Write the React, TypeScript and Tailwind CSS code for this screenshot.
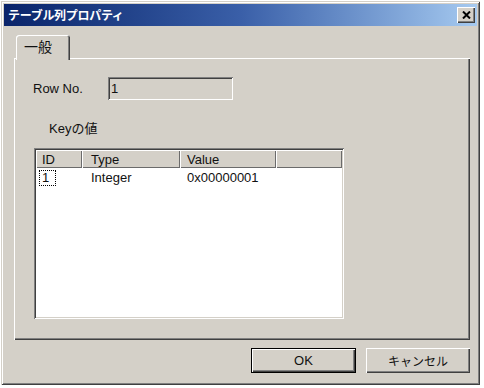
import React from "react";

const raised =
  "shadow-[inset_1px_1px_0_#ffffff,inset_-1px_-1px_0_#404040,inset_-2px_-2px_0_#808080]";
const sunken =
  "shadow-[inset_1px_1px_0_#808080,inset_-1px_-1px_0_#ffffff,inset_2px_2px_0_#404040,inset_-2px_-2px_0_#d4d0c8]";

export default function App() {
  return (
    <div className="w-[484px] h-[388px] bg-white pl-[1px] pt-[1px] text-[#111] font-['Liberation_Sans','Noto_Sans_CJK_JP',sans-serif]">
      <div className="w-[479px] h-[384px] bg-[#d4d0c8] p-[3px] flex flex-col shadow-[inset_1px_1px_0_#d4d0c8,inset_-1px_-1px_0_#404040,inset_2px_2px_0_#ffffff,inset_-2px_-2px_0_#808080]">
        {/* Title bar */}
        <div className="h-[22px] shrink-0 flex items-center justify-between pl-[4px] pr-[2px] bg-linear-to-r from-[#0a246a] via-[#3a5fa8] to-[#a6caf0]">
          <span className="text-white text-[12px] font-bold leading-none font-['Noto_Sans_CJK_JP',sans-serif] tracking-[-0.3px]">
            テーブル列プロパティ
          </span>
          <div className={`w-[18px] h-[16px] bg-[#d4d0c8] flex items-center justify-center ${raised}`}>
            <svg width="9" height="8" viewBox="0 0 9 8">
              <path d="M1 0.5 L8 7.5 M8 0.5 L1 7.5" stroke="#000" strokeWidth="2" fill="none" />
            </svg>
          </div>
        </div>

        {/* Body */}
        <div className="flex-1 flex flex-col pl-[10px] pr-[7px] pt-[9px]">
          {/* Tab strip */}
          <div className="flex pl-[2px]">
            <div className="relative z-10 -mb-[2px] h-[25px] w-[54px] bg-[#d4d0c8] rounded-t-[3px] flex items-start pt-[3px] pl-[8px] shadow-[inset_1px_1px_0_#ffffff,inset_-1px_0_0_#404040,inset_-2px_0_0_#808080]">
              <span className="text-[14px] leading-[17px] font-['Noto_Sans_CJK_JP',sans-serif]">一般</span>
            </div>
          </div>

          {/* Panel */}
          <div className={`w-[456px] h-[282px] shrink-0 flex flex-col pt-[19px] ${raised}`}>
            <div className="flex items-center pl-[19px]">
              <span className="w-[75px] text-[13px] leading-[15px]">Row No.</span>
              <div className={`w-[125px] h-[23px] bg-[#d4d0c8] flex items-center pl-[3px] text-[13px] leading-[15px] ${sunken}`}>
                1
              </div>
            </div>

            <div className="mt-[20px] pl-[35px] text-[13px] leading-[15px]">
              Key<span className="font-['Noto_Sans_CJK_JP',sans-serif]">の値</span>
            </div>

            <div className={`mt-[12px] ml-[20px] w-[310px] h-[171px] bg-white p-[2px] flex flex-col ${sunken}`}>
              {/* Header */}
              <div className="flex h-[18px] text-[13px] leading-[15px]">
                <div className="w-[46px] bg-[#d4d0c8] pl-[6px] flex items-center shadow-[inset_1px_1px_0_#ffffff,inset_-1px_-1px_0_#6b6b6b]">ID</div>
                <div className="w-[98px] bg-[#d4d0c8] pl-[9px] flex items-center shadow-[inset_1px_1px_0_#ffffff,inset_-1px_-1px_0_#6b6b6b]">Type</div>
                <div className="w-[96px] bg-[#d4d0c8] pl-[7px] flex items-center shadow-[inset_1px_1px_0_#ffffff,inset_-1px_-1px_0_#6b6b6b]">Value</div>
                <div className="flex-1 bg-[#d4d0c8] shadow-[inset_1px_1px_0_#ffffff,inset_-1px_-1px_0_#6b6b6b]"></div>
              </div>
              {/* Row */}
              <div className="flex h-[17px] mt-[1px] text-[13px] leading-[15px] items-center">
                <div className="w-[46px] pl-[3px] flex items-center">
                  <span className="border border-dotted border-black h-[16px] w-[17px] pl-[2px] flex items-center">1</span>
                </div>
                <div className="w-[98px] pl-[9px]">Integer</div>
                <div className="w-[96px] pl-[7px]">0x00000001</div>
              </div>
            </div>
          </div>

          {/* Buttons */}
          <div className="flex justify-end gap-[10px] mt-[8px] w-[456px]">
            <div className="w-[105px] h-[25px] border border-black bg-[#d4d0c8]">
              <div className={`w-full h-full flex items-center justify-center text-[13px] leading-[15px] ${raised}`}>OK</div>
            </div>
            <div className={`w-[104px] h-[25px] bg-[#d4d0c8] flex items-center justify-center text-[12px] leading-[15px] font-['Noto_Sans_CJK_JP',sans-serif] ${raised}`}>
              キャンセル
            </div>
          </div>
        </div>
      </div>
    </div>
  );
}
